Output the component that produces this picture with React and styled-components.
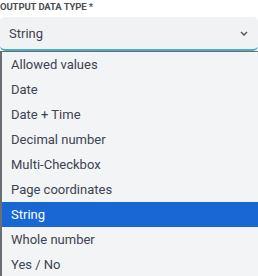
import React from 'react';
import styled, { createGlobalStyle } from 'styled-components';

const GlobalStyle = createGlobalStyle`
	html, body {
		margin: 0;
		padding: 0;
		background: #fff;
	}
	body {
		font-family: Roboto, "Liberation Sans", sans-serif;
		overflow: hidden;
	}
`;

const Field = styled.div`
	width: 258px;
	display: flex;
	flex-direction: column;
`;

const Label = styled.div`
	height: 17px;
	padding-top: 2px;
	box-sizing: border-box;
	font-size: 9.5px;
	font-weight: 700;
	letter-spacing: -0.1px;
	text-transform: uppercase;
	color: #4a4f57;
	line-height: 10px;
`;

const Select = styled.div`
	height: 34px;
	box-sizing: border-box;
	display: flex;
	align-items: center;
	justify-content: space-between;
	padding: 0 9px 0 9px;
	background: #f1f2f4;
	border-radius: 5px;
	border-bottom: 2px solid #4aaec8;
	font-size: 13px;
	color: #3d4350;
`;

const Chevron = styled.svg`
	width: 8px;
	height: 5px;
	margin-right: 1px;
`;

const List = styled.ul`
	list-style: none;
	margin: 0;
	padding: 0;
	background: #f3f4f6;
	border-top: 1px solid #6b6e72;
	border-left: 2px solid #6b6e72;
`;

const Item = styled.li`
	height: 25px;
	display: flex;
	align-items: center;
	padding-left: 9px;
	font-size: 13px;
	color: ${props => (props.$active ? '#ffffff' : '#3d4350')};
	background: ${props => (props.$active ? '#1967d2' : 'transparent')};
`;

const options = [
	'Allowed values',
	'Date',
	'Date + Time',
	'Decimal number',
	'Multi-Checkbox',
	'Page coordinates',
	'String',
	'Whole number',
	'Yes / No',
];

export default function App() {
	const selected = 'String';
	return (
		<>
			<GlobalStyle />
			<Field>
				<Label>Output data type *</Label>
				<Select>
					<span>{selected}</span>
					<Chevron viewBox="0 0 8 5">
						<path d="M1 1l3 3 3-3" fill="none" stroke="#555a62" strokeWidth="1.5" />
					</Chevron>
				</Select>
				<List>
					{options.map(option => (
						<Item key={option} $active={option === selected}>
							{option}
						</Item>
					))}
				</List>
			</Field>
		</>
	);
}
